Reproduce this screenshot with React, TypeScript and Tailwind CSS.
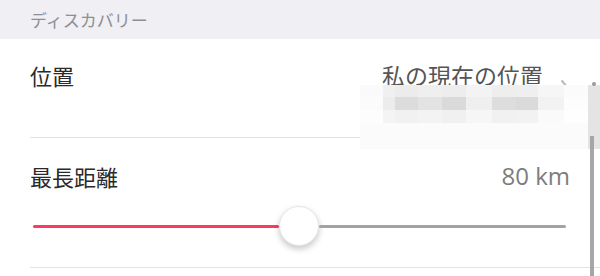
import React from "react";

const font = { fontFamily: '"Noto Sans CJK JP", "Noto Sans", sans-serif' };

// pixelated (mosaic) patch that hides part of the screenshot
const mosaicRows: { h: string; cells: { w: string; c: string }[] }[] = [
  {
    h: "h-[12px]",
    cells: [
      { w: "w-[23px]", c: "bg-[#fafafa]" },
      { w: "w-[12px]", c: "bg-[#f0f0f0]" },
      { w: "w-[24px]", c: "bg-[#ececec]" },
      { w: "w-[24px]", c: "bg-[#efefef]" },
      { w: "w-[24px]", c: "bg-[#ededed]" },
      { w: "w-[26px]", c: "bg-[#f3f3f3]" },
      { w: "w-[24px]", c: "bg-[#eeeeee]" },
      { w: "w-[23px]", c: "bg-[#efefef]" },
      { w: "w-[26px]", c: "bg-[#f6f6f6]" },
      { w: "w-[24px]", c: "bg-[#fbfbfb]" },
    ],
  },
  {
    h: "h-[13px]",
    cells: [
      { w: "w-[23px]", c: "bg-[#fbfbfb]" },
      { w: "w-[12px]", c: "bg-[#ececec]" },
      { w: "w-[24px]", c: "bg-[#dcdcdc]" },
      { w: "w-[24px]", c: "bg-[#e3e3e3]" },
      { w: "w-[24px]", c: "bg-[#dadada]" },
      { w: "w-[26px]", c: "bg-[#efefef]" },
      { w: "w-[24px]", c: "bg-[#dddddd]" },
      { w: "w-[23px]", c: "bg-[#dadada]" },
      { w: "w-[26px]", c: "bg-[#f2f2f2]" },
      { w: "w-[24px]", c: "bg-[#fdfdfd]" },
    ],
  },
  {
    h: "h-[13px]",
    cells: [
      { w: "w-[23px]", c: "bg-[#fdfdfd]" },
      { w: "w-[12px]", c: "bg-[#f4f4f4]" },
      { w: "w-[24px]", c: "bg-[#f1f1f1]" },
      { w: "w-[24px]", c: "bg-[#f3f3f3]" },
      { w: "w-[24px]", c: "bg-[#f0f0f0]" },
      { w: "w-[26px]", c: "bg-[#f6f6f6]" },
      { w: "w-[24px]", c: "bg-[#f1f1f1]" },
      { w: "w-[23px]", c: "bg-[#f2f2f2]" },
      { w: "w-[26px]", c: "bg-[#fafafa]" },
      { w: "w-[24px]", c: "bg-[#fefefe]" },
    ],
  },
];

function Mosaic() {
  return (
    <div className="pointer-events-none absolute left-[360px] top-[85px] flex w-[240px] flex-col">
      <div className="flex">
        <div className="flex w-[228px] flex-col">
          {mosaicRows.map((row, i) => (
            <div key={i} className={`flex ${row.h}`}>
              {row.cells.map((cell, j) => (
                <div key={j} className={`${cell.w} ${cell.c}`} />
              ))}
            </div>
          ))}
          <div className="h-[26px] bg-[#fbfbfb]" />
        </div>
        <div className="h-[64px] w-[12px] bg-[#e4e4e4]" />
      </div>
    </div>
  );
}

export default function App() {
  return (
    <div className="relative h-[276px] w-[600px] overflow-hidden bg-white" style={font}>
      {/* section header */}
      <div className="flex h-[39px] items-center bg-[#efeff4] pl-[30px] text-[17px] text-[#8e8e93]">
        ディスカバリー
      </div>

      {/* location row */}
      <div className="ml-[30px] flex h-[99px] items-start justify-between border-b border-[#e2e2e4] pr-[30px] pt-[20px]">
        <span className="text-[22px] leading-[32px] text-[#2a2a2a]">位置</span>
        <div className="flex items-start gap-[17px]">
          <span className="text-[23px] leading-[32px] text-[#555]">私の現在の位置</span>
          <svg width="10" height="18" viewBox="0 0 10 18" className="mt-[20px]">
            <path d="M2 2 L8 9 L2 16" fill="none" stroke="#b9b9bd" strokeWidth="2" strokeLinecap="round" />
          </svg>
        </div>
      </div>

      {/* distance row */}
      <div className="ml-[30px] flex h-[130px] flex-col border-b border-[#e2e2e4] pr-[30px] pt-[22px]">
        <div className="flex items-center justify-between">
          <span className="text-[22px] leading-[32px] text-[#2a2a2a]">最長距離</span>
          <span className="text-[24px] leading-[32px] text-[#7d7d7d]" style={{ fontFamily: '"Open Sans", sans-serif' }}>
            80 km
          </span>
        </div>
        <div className="mt-[14px] flex h-[40px] items-center pl-[3px] pr-[4px]">
          <div className="h-[3px] w-[246px] rounded-full bg-[#fb3a5e]" />
          <div className="h-[40px] w-[40px] shrink-0 rounded-full border border-[#e6e6e6] bg-white shadow-[0_3px_6px_rgba(0,0,0,0.22)]" />
          <div className="h-[3px] flex-1 rounded-full bg-[#a3a3a3]" />
        </div>
      </div>

      <Mosaic />
      {/* thin vertical bar on the right edge */}
      <div className="absolute left-[590px] top-[136px] h-[140px] w-[4px] bg-[#a6a6a6]" />
      <div className="absolute left-[592px] top-[82px] h-[4px] w-[4px] rounded-full bg-[#9a9a9a]" />
    </div>
  );
}
